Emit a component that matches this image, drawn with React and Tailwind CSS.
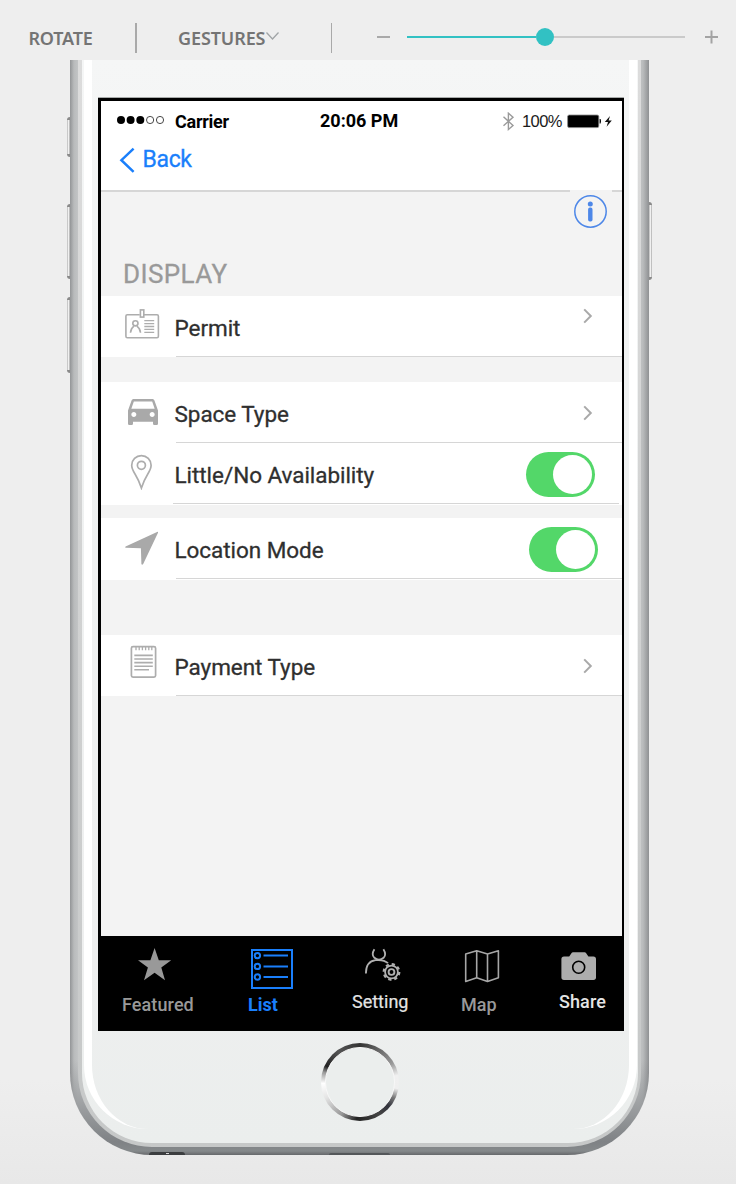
import React from "react";
import { MdDirectionsCar } from "react-icons/md";

const ROBOTO = "font-['Roboto',sans-serif]";

function Chevron({ className }) {
  return (
    <svg className={`shrink-0 ${className}`} width="10" height="16" viewBox="0 0 10 16" fill="none" stroke="#a9a9a9" strokeWidth="2">
      <path d="M1.2 1.4L7.8 8L1.2 14.6" />
    </svg>
  );
}

function Toggle({ className }) {
  return (
    <div className={`flex h-[45px] w-[69px] shrink-0 items-start justify-end rounded-full bg-[#53d769] pr-[3.5px] pt-[2.5px] ${className}`}>
      <div className="h-[39px] w-[39px] rounded-full bg-white" />
    </div>
  );
}

function PermitIcon() {
  return (
    <svg width="36" height="32" viewBox="124 308 36 32" fill="none" stroke="#adadad" strokeWidth="1.6">
      <path d="M139.7 314.8H127.3Q125.9 314.8 125.9 316.2V336.3Q125.9 337.8 127.3 337.8H157Q158.4 337.8 158.4 336.3V316.2Q158.4 314.8 157 314.8H144" />
      <rect x="140.4" y="309.9" width="3.4" height="7.2" />
      <circle cx="135.4" cy="323.3" r="2.6" />
      <path d="M130.5 332.8Q130.8 328.5 133.9 326.2M136.9 326.2Q140.2 328.5 140.5 332.8" />
      <path d="M144.3 320.6H154.2M144.3 323.6H154.2M144.3 326.5H154.2M144.3 329.4H154.2M144.3 332.3H154.2" strokeWidth="1.3" />
    </svg>
  );
}

function PinIcon() {
  return (
    <svg width="24" height="36" viewBox="130 454 24 36" fill="none" stroke="#adadad" strokeWidth="1.7">
      <path d="M141.4 488Q139 480.5 135 474C133 470.8 131.7 468.5 131.7 465.3A9.7 9.7 0 0 1 151.1 465.3C151.1 468.5 149.8 470.8 147.8 474Q143.8 480.5 141.4 488Z" />
      <circle cx="141.4" cy="465.3" r="4" />
    </svg>
  );
}

function ArrowIcon() {
  return (
    <svg width="36" height="36" viewBox="124 530 36 36" fill="#a9a9a9">
      <path d="M157.6 531.8Q158.3 532 158 532.8L143.2 564Q142 565.6 141.4 564L140.9 548.2L125.8 547.8Q124.4 547.2 125.6 546.4Z" />
    </svg>
  );
}

function NotepadIcon() {
  return (
    <svg width="28" height="34" viewBox="130 645 28 34" fill="none" stroke="#adadad" strokeWidth="1.7">
      <rect x="131.4" y="646.6" width="24.2" height="30.6" rx="1.6" />
      <path d="M136 646.6V650.2M139.2 646.6V650.2M142.4 646.6V650.2M145.6 646.6V650.2M148.8 646.6V650.2M151.8 646.6V650.2" strokeWidth="1.3" />
      <path d="M134.3 655.4H152.8M134.3 659H152.8M134.3 662.6H152.8M134.3 666.2H152.8M134.3 669.8H149" strokeWidth="1.6" />
    </svg>
  );
}

function Row({ height, icon, iconClass, label, line = "ml-[75px]", end, tail = "h-0" }) {
  return (
    <div className={`flex flex-col bg-white ${height}`}>
      <div className="flex flex-1 items-start">
        <div className="w-[73.5px] shrink-0">
          <div className={`w-fit ${iconClass}`}>{icon}</div>
        </div>
        <div className="mt-[21px] flex-1 whitespace-nowrap text-[22.5px] leading-[23px] tracking-[-0.05px] text-[#2f2f2f] [-webkit-text-stroke:0.3px_#2f2f2f]">{label}</div>
        {end}
      </div>
      <div className={`h-px shrink-0 bg-[#d6d6d6] ${line}`} />
      <div className={`shrink-0 ${tail}`} />
    </div>
  );
}

function Tab({ width, icon, iconClass, label, labelClass }) {
  return (
    <div className={`flex flex-col items-start ${width}`}>
      <div className="h-[54px]">
        <div className={iconClass}>{icon}</div>
      </div>
      <div className={`whitespace-nowrap leading-[18px] ${labelClass}`}>{label}</div>
    </div>
  );
}

function Toolbar() {
  return (
    <div className="flex h-[60px] items-start font-['Noto_Sans','Open_Sans',sans-serif] text-[18px] font-semibold leading-[24px] text-[#747474]">
      <div className="ml-[28.5px] mt-[26px] w-[106.5px] tracking-[-0.2px]">ROTATE</div>
      <div className="mt-[23px] h-[30px] w-[2px] bg-[#a9a9a9]" />
      <div className="ml-[41px] mt-[26px] w-[88px] whitespace-nowrap tracking-[-0.1px]">GESTURES</div>
      <svg className="mt-[31px] w-[14px]" width="14" height="10" viewBox="0 0 14 10" fill="none" stroke="#a0a4a6" strokeWidth="1.3">
        <path d="M0.5 1.5L6.5 8L12.5 1.5" />
      </svg>
      <div className="ml-[51px] mt-[23px] h-[30px] w-px bg-[#a9a9a9]" />
      <div className="ml-[45px] mt-[36px] h-[2px] w-[13px] bg-[#a9a9a9]" />
      <div className="ml-[17px] mt-[28px] flex h-[18px] w-[278px] items-center">
        <div className="h-[2px] w-[129px] bg-[#32c1c3]" />
        <div className="h-[18px] w-[18px] rounded-full bg-[#32c1c3]" />
        <div className="h-[2px] flex-1 bg-[#cacaca]" />
      </div>
      <svg className="ml-[20px] mt-[30px]" width="14" height="14" viewBox="0 0 14 14" stroke="#a3a3a3" strokeWidth="2">
        <path d="M0 7H13M6.5 0.5V13.5" />
      </svg>
    </div>
  );
}

function Header() {
  return (
    <div className="h-[89px] bg-white">
      <div className="flex h-[40px] items-start text-black">
        <svg className="ml-[15px] mt-[14px]" width="50" height="10" viewBox="0 0 50 10">
          <g fill="#000">
            <circle cx="5" cy="5" r="4" />
            <circle cx="14.6" cy="5" r="4" />
            <circle cx="24.3" cy="5" r="4" />
          </g>
          <g fill="none" stroke="#333" strokeWidth="0.9">
            <circle cx="34.1" cy="5" r="3.6" />
            <circle cx="44" cy="5" r="3.6" />
          </g>
        </svg>
        <div className="ml-[9px] mt-[12px] w-[145px] text-[18px] font-bold leading-[18px] tracking-[-0.25px]">Carrier</div>
        <div className="mt-[11px] w-[182px] text-[18px] font-bold leading-[18px]">20:06 PM</div>
        <svg className="mt-[11px]" width="13" height="19" viewBox="0 0 13 19" fill="none" stroke="#9a9a9a" strokeWidth="1.4">
          <path d="M1.5 4.8L11 13.5L6.4 17.5V1.2L11 5.2L1.5 13.8" />
        </svg>
        <div className="ml-[7px] mt-[12px] w-[44px] font-['Liberation_Sans',sans-serif] text-[16.5px] leading-[17px] tracking-[-0.6px] text-[#1b1b1b]">100%</div>
        <svg className="mt-[13px]" width="46" height="15" viewBox="566 114 46 15">
          <rect x="567.6" y="115" width="31.2" height="12.6" rx="1.6" fill="#000" stroke="#8a8a8a" strokeWidth="0.8" />
          <path d="M599.6 119H600.6Q601.6 121.3 600.6 123.6H599.6Z" fill="#000" />
          <path d="M610 116L604.8 122H608L606.6 126.8L611.8 120.4H608.6Z" fill="#111" />
        </svg>
      </div>
      <div className="flex items-start text-[#1a7ffb]">
        <svg className="ml-[18px] mt-[6px]" width="17" height="27" viewBox="0 0 17 27" fill="none" stroke="#1a7ffb" strokeWidth="2.5">
          <path d="M14.6 1.6L2.4 13.2L14.6 24.9" />
        </svg>
        <div className="ml-[6.5px] mt-[7px] text-[23px] leading-[23px] tracking-[-0.35px] [-webkit-text-stroke:0.3px_#1a7ffb]">Back</div>
      </div>
    </div>
  );
}

function Screen() {
  return (
    <div className={`flex h-[933px] w-[526px] flex-col bg-black pt-[3px] ${ROBOTO}`}>
      <div className="ml-[3px] mr-[2px] flex h-[835px] flex-col bg-[#f3f3f3]">
        <Header />
        <div className="flex h-[2px] shrink-0">
          <div className="w-[469px] bg-[#d6d6d6]" />
          <div className="w-[42px] bg-[#f3f3f3]" />
          <div className="flex-1 bg-[#d6d6d6]" />
        </div>
        <div className="flex h-[104px] shrink-0 items-start">
          <div className="ml-[22px] mt-[69px] w-[450px] text-[26px] leading-[26px] tracking-[0.4px] text-[#999] [-webkit-text-stroke:0.3px_#999]">DISPLAY</div>
          <svg className="mt-[2px]" width="35" height="35" viewBox="0 0 35 35">
            <circle cx="17.5" cy="17.5" r="15.7" fill="none" stroke="#4d87e8" strokeWidth="1.5" />
            <circle cx="17.3" cy="10" r="2.5" fill="#4d87e8" />
            <rect x="15.1" y="13.6" width="4.4" height="14" rx="1.8" fill="#4d87e8" />
          </svg>
        </div>
        <Row height="h-[61px]" icon={<PermitIcon />} iconClass="ml-[23px] mt-[12px]" label="Permit" end={<Chevron className="mr-[29px] mt-[12px]" />} />
        <div className="h-[25px] shrink-0" />
        <Row
          height="h-[61px]"
          icon={<MdDirectionsCar viewBox="3 5 18 16" preserveAspectRatio="none" className="h-[26px] w-[30px] text-[#a9a9a9]" />}
          iconClass="ml-[27px] mt-[17px]"
          label="Space Type"
          end={<Chevron className="mr-[29px] mt-[23px]" />}
        />
        <Row height="h-[62px]" icon={<PinIcon />} iconClass="ml-[29px] mt-[11px]" label="Little/No Availability" line="ml-[72px] mr-[3px]" tail="h-px" end={<Toggle className="mr-[27px] mt-[9px]" />} />
        <div className="h-[13px] shrink-0" />
        <Row height="h-[62px]" icon={<ArrowIcon />} iconClass="ml-[23px] mt-[12px]" label="Location Mode" tail="h-px" end={<Toggle className="mr-[24px] mt-[9px]" />} />
        <div className="h-[55px] shrink-0" />
        <Row height="h-[61px]" icon={<NotepadIcon />} iconClass="ml-[29px] mt-[10px]" label="Payment Type" end={<Chevron className="mr-[29px] mt-[23px]" />} />
      </div>
      <div className="flex flex-1 items-start pt-[6px] text-[18px]">
        <Tab
          width="w-[130px]"
          iconClass="ml-[38px] mt-[4px]"
          icon={
            <svg width="38" height="38" viewBox="136 946 38 38" fill="#999">
              <path d="M154.6 948L158.8 960.2H171.2L161.3 967.6L165 980.3L154.6 972.8L144 980.3L147.9 967.6L138 960.2H150.4Z" />
            </svg>
          }
          label="Featured"
          labelClass="ml-[24px] font-medium tracking-[0.1px] text-[#999]"
        />
        <Tab
          width="w-[104px]"
          iconClass="ml-[22px] mt-[6px]"
          icon={
            <svg width="44" height="42" viewBox="250 948 44 42" fill="none" stroke="#1a7ffb" strokeWidth="2">
              <rect x="252" y="950" width="40" height="38" />
              <g strokeWidth="2">
                <circle cx="257.4" cy="955.6" r="2.7" />
                <circle cx="257.4" cy="966.4" r="2.7" />
                <circle cx="257.4" cy="977" r="2.7" />
                <path d="M263.5 955.6H288M263.5 966.4H288M263.5 977H288" />
              </g>
            </svg>
          }
          label="List"
          labelClass="ml-[20px] font-bold text-[#1a7ffb]"
        />
        <Tab
          width="w-[102px]"
          iconClass="ml-[32px] mt-[6px]"
          icon={
            <svg width="38" height="34" viewBox="364 948 38 34" fill="none" stroke="#b0b0b0" strokeWidth="1.8">
              <path d="M374.4 949.2Q371 954.6 374.4 957.8Q379 961.6 383.6 957.8Q386.8 954.6 383.4 949.2" />
              <path d="M365.9 973.4Q366 961.4 375.6 960.2Q384 959.4 388 963.2" />
              <circle cx="391.5" cy="972" r="6.4" />
              <circle cx="391.5" cy="972" r="2.9" strokeWidth="1.9" />
              <circle cx="391.5" cy="972" r="7.8" strokeWidth="2.2" strokeDasharray="3.2 2.926" />
            </svg>
          }
          label="Setting"
          labelClass="ml-[20px] mt-[-3px] text-[#e4e4e4] [-webkit-text-stroke:0.2px_#e4e4e4]"
        />
        <Tab
          width="w-[98px]"
          iconClass="ml-[30px] mt-[6px]"
          icon={
            <svg width="36" height="36" viewBox="464 948 36 36" fill="none" stroke="#a6a6a6" strokeWidth="1.6" strokeLinejoin="round">
              <path d="M465.7 954L476.7 950.7L487.5 954L498.4 950.7V977.7L487.5 981.4L476.7 977.7L465.7 981.4ZM476.7 950.7V977.7M487.5 954V981.4" />
            </svg>
          }
          label="Map"
          labelClass="ml-[27px] font-medium text-[#999]"
        />
        <Tab
          width="w-[92px]"
          iconClass="ml-[28px] mt-[8px]"
          icon={
            <svg width="38" height="32" viewBox="560 950 38 32">
              <path d="M564 956.6H569.2L571.6 953Q572 952.2 573 952.2H584.6Q585.6 952.2 586 953L588.4 956.6H593.4Q596 956.6 596 959.2V977.6Q596 980 593.4 980H564Q561.4 980 561.4 977.6V959.2Q561.4 956.6 564 956.6Z" fill="#adadad" />
              <circle cx="578.7" cy="967.2" r="6" fill="none" stroke="#000" strokeWidth="1.6" />
            </svg>
          }
          label="Share"
          labelClass="ml-[27px] mt-[-3px] font-medium tracking-[0.1px] text-[#e4e4e4]"
        />
      </div>
    </div>
  );
}

function SideKey({ className, side }) {
  return (
    <div
      className={`shrink-0 border-y-[3px] border-[#8a8a8a] bg-gradient-to-r from-[#b5b5b5] via-[#f0f0f0] to-[#a8a8a8] ${
        side === "left" ? "w-[3px] rounded-l-[3px]" : "w-[3px] rounded-r-[3px]"
      } ${className}`}
    />
  );
}

function Phone() {
  return (
    <div className="flex items-start">
      <div className="flex w-[70px] flex-col items-end">
        <SideKey side="left" className="mt-[57px] h-[40px]" />
        <SideKey side="left" className="mt-[47px] h-[75px]" />
        <SideKey side="left" className="mt-[18px] h-[76px]" />
      </div>
      <div className="h-[1095px] w-[579px] rounded-b-[82px] bg-[linear-gradient(to_bottom,transparent_0,transparent_1000px,#7f8285_1082px,#85898b_1091px,#66686b_1095px),linear-gradient(to_right,#939597_0,#b9bbbc_4px,#c2c4c5_8px,#c2c4c5_569px,#b9bbbc_573px,#8f9193_579px)] px-[8px] pb-[8px]">
        <div className="h-full rounded-b-[74px] bg-[linear-gradient(to_bottom,#dcdcdc,#c6c8c8)] pb-[4px] pl-[4px] pr-[3px]">
          <div className="relative h-full rounded-b-[70px] bg-[linear-gradient(to_bottom,#f5f6f6_0,#f0f2f2_300px,#eeefef_900px,#ebeeed_1083px)] pl-[16px] pt-[37px]">
            <div className="absolute left-[2px] right-[1px] top-0 h-[1069px] rounded-b-[64px] border-x-[8px] border-white" />
            <div className="relative w-[526px] border-t border-[#a8abaa]">
              <Screen />
            </div>
            <div className="ml-[223px] mt-[12px] flex h-[78px] w-[78px] items-center justify-center rounded-full bg-[conic-gradient(#333_0deg,#666_30deg,#999_60deg,#f0f0f0_80deg,#efefef_100deg,#777_115deg,#32333c_130deg,#444_150deg,#222_185deg,#999_210deg,#e4e4e4_245deg,#fff_268deg,#999_285deg,#222_295deg,#555_325deg,#333_360deg)]">
              <div className="h-[70px] w-[70px] rounded-full border border-[#f8f8f8] bg-[#ebeeed]" />
            </div>
          </div>
        </div>
        <div className="flex items-end pt-[5px]">
          <div className="ml-[71px] flex h-[3px] w-[36px] items-center justify-center rounded-t-full bg-[#3b3d3f]">
            <div className="h-px w-[3px] bg-[#d8d8d8]" />
          </div>
          <div className="ml-[144px] h-[2px] w-[61px] rounded-t-[4px] bg-[#54575a]" />
        </div>
      </div>
      <SideKey side="right" className="mt-[142px] h-[78px]" />
    </div>
  );
}

export default function App() {
  return (
    <div className="h-[1184px] w-[736px] overflow-hidden bg-[linear-gradient(to_bottom,#eeeeee_0,#eeeeee_1080px,#e8e8e8_1184px)]">
      <Toolbar />
      <Phone />
    </div>
  );
}
